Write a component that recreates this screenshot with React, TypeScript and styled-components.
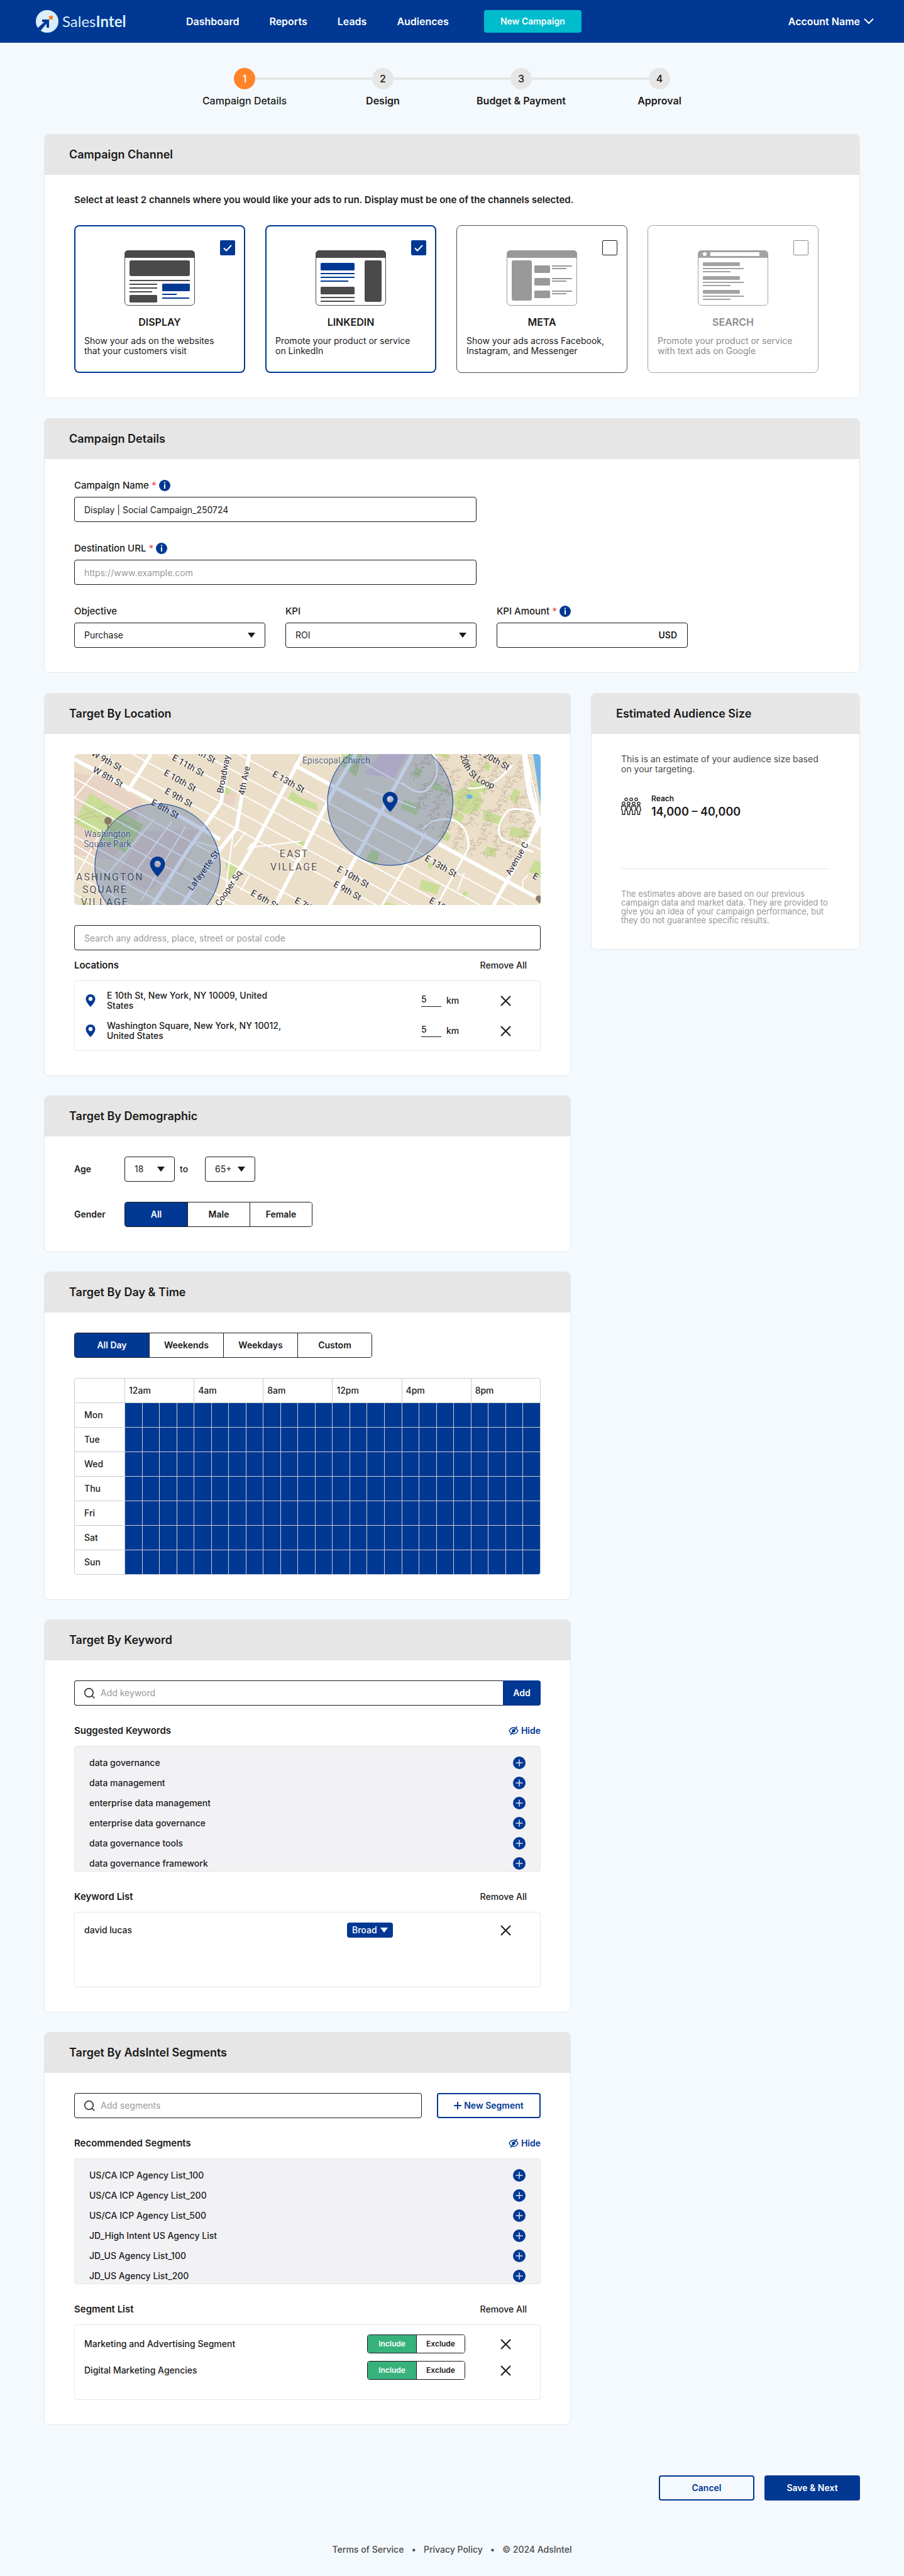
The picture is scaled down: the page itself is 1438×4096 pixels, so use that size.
import React, { useState } from "react";
import styled, { createGlobalStyle, css } from "styled-components";

const c = {
  blue: "#003893",
  teal: "#00bccc",
  orange: "#ff8329",
  ink: "#1a1a1a",
  text: "#4a4a4a",
  mute: "#999999",
  line: "#e6e6e6",
  grid: "#cccccc",
  panel: "#f2f2f5",
  page: "#f4f9fd",
  green: "#38b27d",
  red: "#ef5350",
};

const GlobalStyle = createGlobalStyle`
  *, *::before, *::after { box-sizing: border-box; }
  body {
    margin: 0;
    background: ${c.page};
    color: ${c.ink};
    font-family: Inter, "Noto Sans", sans-serif;
    font-size: 14px;
    line-height: 16px;
  }
  button, input, select { font: inherit; color: inherit; margin: 0; }
  button { cursor: pointer; }
  a { color: inherit; text-decoration: none; }
  h2, h3, p, ul, ol { margin: 0; padding: 0; font-weight: inherit; font-size: inherit; }
  ul, ol { list-style: none; }
`;

/* ---------- header ---------- */

const Header = styled.header`
  display: flex;
  align-items: center;
  height: 68px;
  padding: 0 48px 0 57px;
  background: ${c.blue};
  color: #fff;
`;
const Brand = styled.a`
  display: flex;
  align-items: center;
  gap: 6px;
  width: 239px;
  font-family: Lato, sans-serif;
  font-size: 24px;
  line-height: 32px;
  color: #d9eefa;
  b { font-weight: 700; }
`;
const Nav = styled.nav`
  display: flex;
  align-items: center;
  gap: 48px;
  font-size: 16px;
  font-weight: 600;
`;
const NewCampaign = styled.button`
  height: 36px;
  width: 155px;
  margin-left: 56px;
  border: 0;
  border-radius: 4px;
  background: ${c.teal};
  color: #fff;
  font-weight: 600;
`;
const Account = styled.button`
  display: flex;
  align-items: center;
  gap: 6px;
  margin-left: auto;
  padding: 0;
  border: 0;
  background: none;
  font-size: 16px;
  font-weight: 600;
`;

/* ---------- stepper ---------- */

const Steps = styled.ol`
  display: flex;
  justify-content: center;
  padding: 40px 0 0;
  height: 145px;
`;
const Step = styled.li<{ $current?: boolean }>`
  display: flex;
  flex-direction: column;
  align-items: center;
  gap: 10px;
  width: 220px;
  font-size: 16px;
  line-height: 16px;
  font-weight: ${(p) => (p.$current ? 500 : 600)};
`;
const StepTrack = styled.div<{ $first?: boolean; $last?: boolean }>`
  display: grid;
  grid-template-columns: 1fr 34px 1fr;
  align-items: center;
  width: 100%;
  &::before, &::after { content: ""; height: 4px; background: ${c.line}; }
  &::before { visibility: ${(p) => (p.$first ? "hidden" : "visible")}; }
  &::after { visibility: ${(p) => (p.$last ? "hidden" : "visible")}; }
`;
const StepDot = styled.span<{ $current?: boolean }>`
  display: grid;
  place-items: center;
  height: 34px;
  border-radius: 50%;
  background: ${(p) => (p.$current ? c.orange : c.line)};
  color: ${(p) => (p.$current ? "#fff" : c.ink)};
  font-weight: 500;
`;

/* ---------- page frame ---------- */

const Page = styled.main`
  display: flex;
  flex-direction: column;
  gap: 32px;
  padding: 0 70px;
`;
const Columns = styled.div`
  display: grid;
  grid-template-columns: minmax(0, 1fr) 428px;
  gap: 32px;
  align-items: start;
`;
const Stack = styled.div`
  display: flex;
  flex-direction: column;
  gap: 31px;
`;
const Card = styled.section`
  border: 1px solid ${c.line};
  border-radius: 8px;
  background: #fff;
  overflow: hidden;
`;
const CardTitle = styled.h2`
  padding: 21px 39px;
  background: ${c.line};
  font-size: 18px;
  line-height: 22px;
  font-weight: 600;
`;
const CardBody = styled.div`
  padding: 32px 47px 39px;
`;

/* ---------- shared controls ---------- */

const control = css`
  width: 100%;
  height: 40px;
  padding: 0 15px;
  border: 1px solid ${c.ink};
  border-radius: 4px;
  background: #fff;
  outline: none;
  &::placeholder { color: ${c.mute}; opacity: 1; }
`;
const Input = styled.input`${control}`;
const SelectBox = styled.span<{ $width?: number }>`
  display: grid;
  align-items: center;
  width: ${(p) => (p.$width ? `${p.$width}px` : "100%")};
  > * { grid-area: 1 / 1; }
  > svg { justify-self: end; margin-right: 16px; pointer-events: none; }
`;
const Select = styled.select`
  ${control}
  appearance: none;
`;
const BlueButton = styled.button<{ $width: number; $outline?: boolean }>`
  display: flex;
  align-items: center;
  justify-content: center;
  gap: 4px;
  flex: none;
  width: ${(p) => p.$width}px;
  height: 40px;
  padding: 0;
  border: 2px solid ${c.blue};
  border-radius: 4px;
  background: ${(p) => (p.$outline ? "transparent" : c.blue)};
  color: ${(p) => (p.$outline ? c.blue : "#fff")};
  font-weight: 600;
`;
const Segmented = styled.div<{ $cell: number; $small?: boolean }>`
  display: inline-flex;
  height: ${(p) => (p.$small ? 30 : 40)}px;
  border: 1px solid ${c.ink};
  border-radius: 4px;
  overflow: hidden;
  font-size: ${(p) => (p.$small ? 12 : 14)}px;
  font-weight: 600;
  button { width: ${(p) => p.$cell}px; }
`;
const Segment = styled.button<{ $on: boolean; $tone?: string }>`
  padding: 0;
  border: 0;
  background: ${(p) => (p.$on ? p.$tone || c.blue : "#fff")};
  color: ${(p) => (p.$on ? "#fff" : c.ink)};
  & + & { border-left: 1px solid ${c.ink}; }
`;
const IconButton = styled.button`
  display: grid;
  place-items: center;
  padding: 0;
  border: 0;
  background: none;
`;
const RowHead = styled.div<{ $inset?: boolean }>`
  display: flex;
  justify-content: space-between;
  align-items: center;
  height: 16px;
  margin: ${(p) => (p.$inset ? "0 22px 0 0" : "0")};
  h3 { font-size: 15px; font-weight: 600; }
`;
const PlainButton = styled.button`
  padding: 0;
  border: 0;
  background: none;
  font-weight: 500;
`;
const HideButton = styled(PlainButton)`
  display: flex;
  align-items: center;
  gap: 4px;
  color: ${c.blue};
  font-weight: 600;
`;

/* ---------- channels ---------- */

const Lead = styled.p`
  margin-bottom: 32px;
  font-size: 15px;
  font-weight: 600;
`;
const Channels = styled.div`
  display: grid;
  grid-template-columns: repeat(4, 272px);
  gap: 32px;
`;
const Channel = styled.label<{ $on?: boolean; $off?: boolean }>`
  display: grid;
  grid-template-columns: 1fr 112px 1fr;
  grid-template-rows: auto auto 1fr;
  height: 235px;
  padding: ${(p) => (p.$on ? "22px 14px" : "23px 15px")};
  border: ${(p) => (p.$on ? `2px solid ${c.blue}` : `1px solid ${p.$off ? "#a3a3a3" : c.text}`)};
  border-radius: 8px;
  color: ${(p) => (p.$off ? "#8c8c8c" : c.ink)};
  > svg { grid-column: 2; margin-top: 16px; }
`;
const ChannelName = styled.span`
  grid-column: 1 / -1;
  margin: 18px 0 14px;
  text-align: center;
  font-size: 16px;
  font-weight: 600;
`;
const ChannelText = styled.span`
  grid-column: 1 / -1;
  white-space: pre-line;
`;
const Tick = styled.span`
  display: grid;
  place-items: center;
  grid-column: 3;
  justify-self: end;
  align-self: start;
  grid-row: 1;
  > * { grid-area: 1 / 1; }
  svg { pointer-events: none; }
`;
const TickInput = styled.input`
  appearance: none;
  width: 24px;
  height: 24px;
  border: 1px solid currentColor;
  border-radius: 2px;
  &:checked { background: ${c.blue}; border-color: ${c.blue}; }
`;

/* ---------- details ---------- */

const Fields = styled.div`
  display: grid;
  grid-template-columns: repeat(3, 304px);
  gap: 32px;
`;
const Field = styled.div<{ $wide?: boolean }>`
  grid-column: ${(p) => (p.$wide ? "1 / -1" : "auto")};
  width: ${(p) => (p.$wide ? "640px" : "100%")};
`;
const LabelRow = styled.div`
  display: flex;
  align-items: center;
  gap: 4px;
  height: 20px;
  margin-bottom: 8px;
  font-size: 15px;
  line-height: 20px;
  font-weight: 500;
  em { color: ${c.red}; font-style: normal; }
`;
const Suffixed = styled.div`
  ${control}
  display: flex;
  align-items: center;
  padding: 0 16px 0 0;
  input { flex: 1; min-width: 0; height: 100%; border: 0; padding: 0 15px; background: none; outline: none; }
  b { font-weight: 600; }
`;

/* ---------- location ---------- */

const MapFrame = styled.div`
  height: 240px;
  border-radius: 6px;
  overflow: hidden;
  svg { display: block; width: 100%; height: 100%; }
`;
const Gap = styled.div<{ $h: number }>`
  height: ${(p) => p.$h}px;
`;
const ListBox = styled.ul<{ $height: number; $top: number }>`
  min-height: ${(p) => p.$height}px;
  padding: ${(p) => p.$top}px 15px 0;
  border: 1px solid ${c.line};
  border-radius: 4px;
`;
const PlaceRow = styled.li`
  display: grid;
  grid-template-columns: 20px 280px 1fr 78px 80px;
  column-gap: 16px;
  align-items: center;
  height: 48px;
  font-weight: 500;
  > svg { justify-self: center; }
`;
const Radius = styled.label`
  display: flex;
  align-items: center;
  gap: 8px;
  grid-column: 4;
  input { width: 32px; height: 20px; padding: 0 0 4px; border: 0; border-bottom: 1px solid ${c.ink}; background: none; outline: none; }
`;

/* ---------- audience ---------- */

const AudienceBody = styled(CardBody)`
  color: ${c.text};
`;
const Reach = styled.div`
  display: flex;
  align-items: center;
  gap: 16px;
  margin: 30px 0 78px;
  color: ${c.ink};
  dl { margin: 0; }
  dt { font-size: 12px; font-weight: 600; line-height: 18px; }
  dd { margin: 0; font-size: 18px; font-weight: 600; line-height: 24px; }
`;
const Note = styled.p`
  padding-top: 32px;
  border-top: 1px solid ${c.line};
  color: ${c.mute};
  font-size: 13px;
  line-height: 14px;
  white-space: pre-line;
`;

/* ---------- demographic ---------- */

const DemoRow = styled.div`
  display: flex;
  align-items: center;
  height: 40px;
  & + & { margin-top: 32px; }
`;
const DemoLabel = styled.span`
  width: 80px;
  font-weight: 600;
`;
const To = styled.span`
  width: 48px;
  padding-left: 8px;
  font-weight: 500;
`;

/* ---------- schedule ---------- */

const ScheduleFrame = styled.div`
  border: 1px solid ${c.grid};
  border-radius: 4px;
  overflow: hidden;
`;
const Schedule = styled.table`
  width: 100%;
  table-layout: fixed;
  border-collapse: separate;
  border-spacing: 0;
  font-weight: 500;
  td, th { height: 39px; padding: 0; text-align: left; font-weight: 500; }
  thead th, thead td { height: 38px; padding-left: 6px; }
  thead th { border-left: 1px solid ${c.grid}; }
  tbody th { padding-left: 15px; border-top: 1px solid ${c.grid}; }
  tbody td { border-top: 1px solid ${c.grid}; border-left: 1px solid ${c.grid}; background: ${c.blue}; }
`;

/* ---------- keyword / segment ---------- */

const SearchRow = styled.div<{ $joined?: boolean }>`
  display: flex;
  gap: ${(p) => (p.$joined ? 0 : 24)}px;
  ${(p) => p.$joined && css`
    > label { border-radius: 4px 0 0 4px; border-right: 0; }
    > button { border-radius: 0 4px 4px 0; }
  `}
`;
const SearchField = styled.label`
  ${control}
  display: flex;
  align-items: center;
  gap: 9px;
  flex: 1;
  input { flex: 1; min-width: 0; border: 0; padding: 0; background: none; outline: none; }
  input::placeholder { color: ${c.mute}; opacity: 1; }
`;
const Suggestions = styled.ul`
  height: 200px;
  padding: 10px 23px 0;
  border: 1px solid ${c.line};
  border-radius: 4px;
  background: ${c.panel};
  overflow: hidden;
  font-weight: 500;
  li { display: flex; justify-content: space-between; align-items: center; height: 32px; }
`;
const ListRow = styled.li<{ $gap: number }>`
  display: grid;
  grid-template-columns: minmax(0, 1fr) auto 80px;
  column-gap: ${(p) => p.$gap}px;
  align-items: center;
  height: 42px;
  font-weight: 500;
`;
const CloseCell = styled.span`
  display: flex;
  justify-content: center;
`;
const Match = styled(SelectBox)`
  > svg { margin-right: 8px; }
`;
const MatchSelect = styled.select`
  appearance: none;
  width: 73px;
  height: 24px;
  padding: 0 8px;
  border: 0;
  border-radius: 4px;
  background: ${c.blue};
  color: #fff;
  font-weight: 500;
`;

/* ---------- foot ---------- */

const Actions = styled.div`
  display: flex;
  justify-content: flex-end;
  gap: 16px;
  padding-top: 48px;
`;
const Footer = styled.footer`
  display: flex;
  justify-content: center;
  align-items: center;
  gap: 12px;
  height: 120px;
  padding-top: 36px;
  color: ${c.text};
  font-weight: 500;
`;

/* ---------- icons ---------- */

const LogoMark = () => (
  <svg width="36" height="36" viewBox="0 0 36 36" aria-hidden="true">
    <circle cx="18" cy="18" r="18" fill="#d9eefa" />
    <path d="M10 15h11v13h-4v-6.500L7.500 33 3 28.500 13.500 19H10z" fill={c.blue} />
    <rect x="21" y="9" width="6" height="6" fill={c.orange} />
  </svg>
);
const Chevron = () => (
  <svg width="16" height="10" viewBox="0 0 16 10" fill="none" stroke="#fff" strokeWidth="2" aria-hidden="true">
    <path d="M1 1l7 7 7-7" />
  </svg>
);
const Caret = ({ color = c.ink }: { color?: string }) => (
  <svg width="12" height="8" viewBox="0 0 12 8" aria-hidden="true">
    <path d="M0 0h12L6 8z" fill={color} />
  </svg>
);
const Check = () => (
  <svg width="14" height="11" viewBox="0 0 14 11" fill="none" stroke="#fff" strokeWidth="2" aria-hidden="true">
    <path d="M1 5.500l4 4 8-8.500" />
  </svg>
);
const Info = () => (
  <svg width="18" height="18" viewBox="0 0 18 18" aria-hidden="true">
    <circle cx="9" cy="9" r="9" fill={c.blue} />
    <rect x="8" y="7" width="2" height="7" fill="#fff" />
    <rect x="8" y="3.500" width="2" height="2" fill="#fff" />
  </svg>
);
const PinShape = () => (
  <path
    fill={c.blue}
    fillRule="evenodd"
    d="M12 0C5.400 0 0 5.200 0 11.800 0 20 12 32 12 32s12-12 12-20.200C24 5.200 18.600 0 12 0zm0 6.500a5.200 5.200 0 1 1 0 10.400 5.200 5.200 0 0 1 0-10.400z"
  />
);
const Pin = () => (
  <svg width="16" height="20" viewBox="0 0 24 32" aria-hidden="true">
    <PinShape />
  </svg>
);
const Close = () => (
  <svg width="17" height="17" viewBox="0 0 17 17" fill="none" stroke={c.ink} strokeWidth="2" aria-hidden="true">
    <path d="M1 1l15 15M16 1L1 16" />
  </svg>
);
const Search = () => (
  <svg width="17" height="17" viewBox="0 0 17 17" fill="none" stroke={c.ink} strokeWidth="1.500" aria-hidden="true">
    <circle cx="7.500" cy="7.500" r="6.700" />
    <path d="M12.300 12.300l4 4" />
  </svg>
);
const EyeOff = () => (
  <svg width="16" height="14" viewBox="0 0 16 14" fill="none" stroke={c.blue} strokeWidth="1.500" aria-hidden="true">
    <path d="M1 7c2-3.500 4.300-5 7-5s5 1.500 7 5c-2 3.500-4.300 5-7 5S3 10.500 1 7z" />
    <circle cx="8" cy="7" r="2.700" fill={c.blue} stroke="none" />
    <path d="M13.500 0L3 14" />
  </svg>
);
const PlusDot = () => (
  <svg width="20" height="20" viewBox="0 0 20 20" aria-hidden="true">
    <circle cx="10" cy="10" r="10" fill={c.blue} />
    <path d="M10 4.500v11M4.500 10h11" stroke="#d9e2f2" strokeWidth="1.500" />
  </svg>
);
const Plus = () => (
  <svg width="12" height="12" viewBox="0 0 12 12" aria-hidden="true">
    <path d="M6 0v12M0 6h12" stroke={c.blue} strokeWidth="2" />
  </svg>
);
const People = () => (
  <svg width="32" height="28" viewBox="0 0 32 28" fill="none" stroke={c.ink} strokeWidth="1.300" aria-hidden="true">
    {[8, 16, 24].map((x) => <circle key={x} cx={x} cy="3" r="2.200" />)}
    {[4, 12, 20, 28].map((x) => <circle key={x} cx={x} cy="9.500" r="2.200" />)}
    {[4, 20].map((x) => (
      <path key={x} d={`M${x - 3.3} 13.500h6.600v6l-1.300 1v6.500h-4v-6.500l-1.300-1z`} />
    ))}
    {[12, 28].map((x) => (
      <path key={x} d={`M${x - 1.8} 13.500h3.600l1.700 7-1.900 1.500v5h-3.200v-5l-1.900-1.500z`} />
    ))}
  </svg>
);

type Bar = [number, number, number, number, string?];
const Browser = ({ tone, bars, search }: { tone: string; bars: Bar[]; search?: boolean }) => (
  <svg width="112" height="88" viewBox="0 0 112 88" aria-hidden="true">
    <rect x="0.500" y="0.500" width="111" height="87" rx="5.500" fill="#fff" stroke={tone} />
    <path d="M0 12V6a6 6 0 0 1 6-6h100a6 6 0 0 1 6 6v6z" fill={tone} />
    {search && <circle cx="11" cy="6" r="3" fill="#fff" />}
    {search && <rect x="20" y="3" width="78" height="6" fill="#fff" />}
    {bars.map(([x, y, w, h, fill], i) => (
      <rect key={i} x={x} y={y} width={w} height={h} rx={h > 20 ? 3 : h > 2 ? 1.5 : 0} fill={fill || tone} />
    ))}
  </svg>
);

const displayBars: Bar[] = [
  [8, 16, 96, 25], [8, 47, 96, 2], [8, 53, 44, 2], [8, 59, 44, 2], [8, 65, 36, 2], [8, 71, 44, 12],
  [60, 53, 44, 12, c.blue], [60, 69, 23, 2, c.blue], [60, 75, 43, 2, c.blue],
];
const linkedinBars: Bar[] = [
  [8, 20, 54, 12, c.blue], [8, 36, 54, 2, c.blue], [8, 42, 54, 2, c.blue], [8, 48, 44, 2, c.blue],
  [8, 58, 54, 12], [8, 74, 54, 2], [8, 80, 54, 2], [78, 16, 27, 66],
];
const metaBars: Bar[] = [
  [8, 16, 32, 64],
  ...[24, 44, 64].flatMap((y): Bar[] => [[44, y, 25, 12], [72, y, 32, 2], [72, y + 4, 23, 2]]),
];
const searchBars: Bar[] = [19, 41, 63].flatMap((y): Bar[] => [[8, y, 59, 6], [8, y + 9, 65, 2], [8, y + 14, 44, 2]]);

/* ---------- map ---------- */

const crossStreets = [-158, -82, -7, 67, 138, 285, 360, 435, 510, 585, 660, 735];
const courtyards = Array.from({ length: 96 }, (_, i) => {
  const x = 1090 + ((i * 67) % 350);
  const y = 262 + ((i * 113) % 400);
  return { x, y, turn: (i * 47) % 180 };
}).filter((p) => p.y < 0.73 * p.x - 260);

const Roads = styled.g`
  fill: none;
  stroke: #fff;
  stroke-linejoin: round;
  path { vector-effect: non-scaling-stroke; }
`;
const MapText = styled.g`
  font-family: Roboto, sans-serif;
  font-size: 14px;
  fill: #1f2126;
  stroke: #fff;
  stroke-opacity: 0.6;
  stroke-width: 2px;
  paint-order: stroke;
  text-anchor: middle;
`;
const Place = styled.text`
  fill: #5f6472;
`;
const District = styled.text`
  font-size: 16px;
  letter-spacing: 2px;
  fill: #5f5346;
`;

const streetNames: [string, number, number, number][] = [
  ["W 9th St", 52, 10, 29], ["W 8th St", 54, 36, 29], ["E 11th St", 182, 18, 29], ["E 12th St", 200, -3, 29],
  ["E 10th St", 169, 42, 29], ["E 9th St", 167, 69, 29], ["E 8th St", 145, 87, 29], ["E 13th St", 342, 44, 29],
  ["Broadway", 238, 32, -79], ["4th Ave", 271, 42, -79], ["Lafayette St", 206, 185, -54], ["Cooper Sq", 246, 213, -56],
  ["Avenue C", 706, 166, -60], ["E 13th St", 585, 178, 29], ["E 10th St", 445, 195, 29], ["E 9th St", 436, 217, 29],
  ["E 6th St", 304, 231, 29], ["E 7th St", 374, 243, 29], ["E 12th St", 592, 245, 29], ["E 20th St", 669, 8, 29],
  ["E 12th St", 757, 206, 29],
];

const CityMap = () => (
  <svg viewBox="0 0 744 240" preserveAspectRatio="none" role="img" aria-label="Map of the East Village with two target areas">
    <rect width="744" height="240" fill="#ebdfca" />
    <g transform="scale(.5487 .4082) translate(-106 -268)">
      <g fill="#e9d3c4">
        <path d="M106 340l90 20 110 90-30 120-60 110-110-20z" />
        <path d="M310 570l170-10-60 160-100 80-90-60z" />
        <path d="M540 400l40 10-10 60-50-10z" />
      </g>
      <path fill="#e6cdd6" d="M995 268h80l-40 95-85-18z" />
      <g fill="#c8dd95">
        <path d="M152 420l155 125-50 110-151-120z" />
        <path d="M545 690l45 20-35 50zM740 410l20 25 50 25 5 30-60-30-28-20zM745 610l35-2-10 30zM545 395l18 5-5 25-15-5z" />
        <path d="M885 268h60l-20 90-45-50zM1145 365l60 60-60-20zM1065 445l45 25-10 35-45-25zM1100 320l20 15-15 30-15-15z" />
        <ellipse cx="1250" cy="450" rx="42" ry="50" />
        <path d="M1260 370l50 15-10 35-50-20zM1295 485l60 30-5 30-55-20zM1385 400l18 15-10 45-22-15zM1215 490l25 20-10 30-25-20zM1375 550l50 15 5 30-60-5zM1305 625l30 15-8 32-28-15zM1300 300l18 12-8 22-20-12zM1180 570l22 15-10 25-20-15zM970 640l25 15-15 50-25-30zM1115 755l55 25-10 35-50-20zM1130 690l20 5-10 25zM1160 740l-15 25zM1240 800l12 8-10 22-10-8zM1445 680l17 10v60l-35-25zM1015 845l30 12h-40zM130 815l20 42h-25zM1150 268h45v20z" />
      </g>
      <ellipse cx="1255" cy="434" rx="9" ry="9" fill="#6db3e8" />
      <path d="M1440 268h22v200z" fill="#6db3e8" />
      <Roads style={{ stroke: "#c6b39a" }} strokeWidth="1">
        {courtyards.map((p, i) => (
          <path key={i} transform={`translate(${p.x} ${p.y}) rotate(${p.turn})`} d="M-18 0q9-12 18 0t18 0M-8-14v14l8 12M8-6l12-8M4 2v14" />
        ))}
        <path d="M106 520l100-50M130 470l120 130M110 540q60-70 190 20M930 300v30q-12 20-12-6z" />
      </Roads>
      <Roads strokeWidth="2">
        {crossStreets.map((k) => (
          <path key={k} d={`M106 ${77 + k}L1500 ${1095 + k}`} />
        ))}
        <path d="M930 290l150 110M950 400l150 78M106 440l60-100 45-72M106 620l60 50M200 740l140-220M250 790l140-260M300 840l130-290M106 760l70-170" />
        <path d="M570 560L540 857M590 800l25-60M605 570l-35 60M630 630l135-22M1420 268l30 180 12 100M460 610l70 25M1462 640l-60-40M1220 800l20-70M1410 800v-40l15-20" />
      </Roads>
      <Roads strokeWidth="3">
        <path d="M1120 560q30-50 90-35 45 30 42 110l-12 30M1455 500q-60-30-90-10-40 70-15 110l90 50M1060 380q40 50 70 30 50-60 20-142M1250 400q60 10 110-60l20-30" />
        <path d="M1240 665l-80 192M1128 575L1000 857M610 640l15-25" />
      </Roads>
      <Roads strokeWidth="6">
        <path d="M106 288L340 455 530 600M330 268L262 412M555 268l-22 190-100 190-100 210M615 268l-25 190-12 100-48 80-110 219" />
        <path d="M770 268L630 620 585 720 520 857M925 268l-60 130-95 250-80 209M1090 268l-90 222L848 857M745 310L1462 835M1450 555L1325 857" />
      </Roads>
      <Roads strokeWidth="9">
        <path d="M1415 268l15 150 27 115-15 40" />
      </Roads>
    </g>
    <MapText>
      <Place x="418" y="15">Episcopal Church</Place>
      <Place x="53" y="132">Washington</Place>
      <Place x="53" y="148">Square Park</Place>
      <District x="57" y="201">ASHINGTON</District>
      <District x="49" y="221">SQUARE</District>
      <District x="49" y="241">VILLAGE</District>
      <District x="351" y="164">EAST</District>
      <District x="351" y="185">VILLAGE</District>
      {streetNames.map(([name, x, y, a], i) => (
        <text key={i} transform={`translate(${x} ${y}) rotate(${a})`} dy="5">{name}</text>
      ))}
      <path id="loop" d="M616 2Q624 44 672 56" fill="none" stroke="none" />
      <text style={{ textAnchor: "start" }}><textPath href="#loop">20th St Loop</textPath></text>
    </MapText>
    <g fill="#8a7866">
      <circle cx="54" cy="106" r="6" /><rect x="53" y="108" width="2" height="10" />
      <path d="M736 231a5 5 0 0 1 8-5v14z" />
    </g>
    <g fill={c.blue} fillOpacity="0.250" stroke={c.blue}>
      <circle cx="133" cy="179" r="100" />
      <circle cx="504" cy="77" r="100" />
    </g>
    <g transform="translate(121 163)"><PinShape /></g>
    <g transform="translate(492 60)"><PinShape /></g>
  </svg>
);

/* ---------- parts ---------- */

const Toggle = ({ label, options, cell, small, tone }: {
  label: string; options: string[]; cell: number; small?: boolean; tone?: string;
}) => {
  const [on, setOn] = useState(0);
  return (
    <Segmented role="group" aria-label={label} $cell={cell} $small={small}>
      {options.map((o, i) => (
        <Segment key={o} type="button" $on={i === on} $tone={tone} aria-pressed={i === on} onClick={() => setOn(i)}>{o}</Segment>
      ))}
    </Segmented>
  );
};

const ChannelCard = ({ name, text, art, checked, disabled }: {
  name: string; text: string; art: React.ReactNode; checked?: boolean; disabled?: boolean;
}) => (
  <Channel $on={checked} $off={disabled}>
    {art}
    <Tick>
      <TickInput type="checkbox" defaultChecked={checked} disabled={disabled} />
      {checked && <Check />}
    </Tick>
    <ChannelName>{name}</ChannelName>
    <ChannelText>{text}</ChannelText>
  </Channel>
);

const FieldLabel = ({ id, text, required }: { id: string; text: string; required?: boolean }) => (
  <LabelRow>
    <label htmlFor={id}>{text}</label>
    {required && <em>*</em>}
    {required && <Info />}
  </LabelRow>
);

const SuggestionList = ({ items }: { items: string[] }) => (
  <Suggestions>
    {items.map((item) => (
      <li key={item}>
        {item}
        <IconButton type="button" aria-label={`Add ${item}`}><PlusDot /></IconButton>
      </li>
    ))}
  </Suggestions>
);

const Remove = ({ what }: { what: string }) => (
  <CloseCell>
    <IconButton type="button" aria-label={`Remove ${what}`}><Close /></IconButton>
  </CloseCell>
);

const places = ["E 10th St, New York, NY 10009, United States", "Washington Square, New York, NY 10012, United States"];
const keywords = ["data governance", "data management", "enterprise data management", "enterprise data governance", "data governance tools", "data governance framework"];
const segments = ["US/CA ICP Agency List_100", "US/CA ICP Agency List_200", "US/CA ICP Agency List_500", "JD_High Intent US Agency List", "JD_US Agency List_100", "JD_US Agency List_200"];
const chosen = ["Marketing and Advertising Segment", "Digital Marketing Agencies"];
const hours = ["12am", "4am", "8am", "12pm", "4pm", "8pm"];
const days = ["Mon", "Tue", "Wed", "Thu", "Fri", "Sat", "Sun"];
const steps = ["Campaign Details", "Design", "Budget & Payment", "Approval"];
const note = `The estimates above are based on our previous
campaign data and market data. They are provided to
give you an idea of your campaign performance, but
they do not guarantee specific results.`;

export default function App() {
  return (
    <>
      <GlobalStyle />
      <Header>
        <Brand href="#"><LogoMark /><span>Sales<b>Intel</b></span></Brand>
        <Nav>
          <a href="#">Dashboard</a>
          <a href="#">Reports</a>
          <a href="#">Leads</a>
          <a href="#">Audiences</a>
        </Nav>
        <NewCampaign type="button">New Campaign</NewCampaign>
        <Account type="button">Account Name<Chevron /></Account>
      </Header>

      <Steps>
        {steps.map((s, i) => (
          <Step key={s} $current={i === 0}>
            <StepTrack $first={i === 0} $last={i === steps.length - 1}>
              <StepDot $current={i === 0}>{i + 1}</StepDot>
            </StepTrack>
            {s}
          </Step>
        ))}
      </Steps>

      <Page>
        <Card>
          <CardTitle>Campaign Channel</CardTitle>
          <CardBody>
            <Lead>Select at least 2 channels where you would like your ads to run. Display must be one of the channels selected.</Lead>
            <Channels>
              <ChannelCard checked name="DISPLAY" text={"Show your ads on the websites\nthat your customers visit"} art={<Browser tone={c.text} bars={displayBars} />} />
              <ChannelCard checked name="LINKEDIN" text={"Promote your product or service\non LinkedIn"} art={<Browser tone={c.text} bars={linkedinBars} />} />
              <ChannelCard name="META" text={"Show your ads across Facebook,\nInstagram, and Messenger"} art={<Browser tone="#999" bars={metaBars} />} />
              <ChannelCard disabled name="SEARCH" text={"Promote your product or service\nwith text ads on Google"} art={<Browser tone="#a3a3a3" bars={searchBars} search />} />
            </Channels>
          </CardBody>
        </Card>

        <Card>
          <CardTitle>Campaign Details</CardTitle>
          <CardBody>
            <Fields>
              <Field $wide>
                <FieldLabel id="name" text="Campaign Name" required />
                <Input id="name" defaultValue="Display | Social Campaign_250724" />
              </Field>
              <Field $wide>
                <FieldLabel id="url" text="Destination URL" required />
                <Input id="url" placeholder="https://www.example.com" />
              </Field>
              <Field>
                <FieldLabel id="objective" text="Objective" />
                <SelectBox><Select id="objective"><option>Purchase</option></Select><Caret /></SelectBox>
              </Field>
              <Field>
                <FieldLabel id="kpi" text="KPI" />
                <SelectBox><Select id="kpi"><option>ROI</option></Select><Caret /></SelectBox>
              </Field>
              <Field>
                <FieldLabel id="amount" text="KPI Amount" required />
                <Suffixed><input id="amount" /><b>USD</b></Suffixed>
              </Field>
            </Fields>
          </CardBody>
        </Card>

        <Columns>
          <Stack>
            <Card>
              <CardTitle>Target By Location</CardTitle>
              <CardBody>
                <MapFrame><CityMap /></MapFrame>
                <Gap $h={32} />
                <Input aria-label="Search locations" placeholder="Search any address, place, street or postal code" />
                <Gap $h={16} />
                <RowHead $inset><h3>Locations</h3><PlainButton type="button">Remove All</PlainButton></RowHead>
                <Gap $h={16} />
                <ListBox $height={112} $top={7}>
                  {places.map((p) => (
                    <PlaceRow key={p}>
                      <Pin />
                      <span>{p}</span>
                      <Radius><input defaultValue="5" />km</Radius>
                      <Remove what={p} />
                    </PlaceRow>
                  ))}
                </ListBox>
              </CardBody>
            </Card>

            <Card>
              <CardTitle>Target By Demographic</CardTitle>
              <CardBody>
                <DemoRow>
                  <DemoLabel>Age</DemoLabel>
                  <SelectBox $width={80}><Select aria-label="Youngest age"><option>18</option></Select><Caret /></SelectBox>
                  <To>to</To>
                  <SelectBox $width={80}><Select aria-label="Oldest age"><option>65+</option></Select><Caret /></SelectBox>
                </DemoRow>
                <DemoRow>
                  <DemoLabel>Gender</DemoLabel>
                  <Toggle label="Gender" options={["All", "Male", "Female"]} cell={99} />
                </DemoRow>
              </CardBody>
            </Card>

            <Card>
              <CardTitle>Target By Day &amp; Time</CardTitle>
              <CardBody>
                <DemoRow>
                  <Toggle label="Days" options={["All Day", "Weekends", "Weekdays", "Custom"]} cell={118} />
                </DemoRow>
                <Gap $h={32} />
                <ScheduleFrame>
                  <Schedule>
                    <colgroup>
                      <col width="79" />
                      {Array.from({ length: 24 }, (_, i) => <col key={i} />)}
                    </colgroup>
                    <thead>
                      <tr>
                        <td />
                        {hours.map((h) => <th key={h} scope="col" colSpan={4}>{h}</th>)}
                      </tr>
                    </thead>
                    <tbody>
                      {days.map((d) => (
                        <tr key={d}>
                          <th scope="row">{d}</th>
                          {Array.from({ length: 24 }, (_, i) => <td key={i} />)}
                        </tr>
                      ))}
                    </tbody>
                  </Schedule>
                </ScheduleFrame>
              </CardBody>
            </Card>

            <Card>
              <CardTitle>Target By Keyword</CardTitle>
              <CardBody>
                <SearchRow $joined>
                  <SearchField><Search /><input aria-label="Keyword" placeholder="Add keyword" /></SearchField>
                  <BlueButton type="button" $width={60}>Add</BlueButton>
                </SearchRow>
                <Gap $h={32} />
                <RowHead><h3>Suggested Keywords</h3><HideButton type="button"><EyeOff />Hide</HideButton></RowHead>
                <Gap $h={16} />
                <SuggestionList items={keywords} />
                <Gap $h={32} />
                <RowHead $inset><h3>Keyword List</h3><PlainButton type="button">Remove All</PlainButton></RowHead>
                <Gap $h={16} />
                <ListBox $height={120} $top={7}>
                  <ListRow $gap={139}>
                    <span>david lucas</span>
                    <Match $width={73}><MatchSelect aria-label="Match type"><option>Broad</option></MatchSelect><Caret color="#fff" /></Match>
                    <Remove what="david lucas" />
                  </ListRow>
                </ListBox>
              </CardBody>
            </Card>

            <Card>
              <CardTitle>Target By AdsIntel Segments</CardTitle>
              <CardBody>
                <SearchRow>
                  <SearchField><Search /><input aria-label="Segments" placeholder="Add segments" /></SearchField>
                  <BlueButton type="button" $width={165} $outline><Plus />New Segment</BlueButton>
                </SearchRow>
                <Gap $h={32} />
                <RowHead><h3>Recommended Segments</h3><HideButton type="button"><EyeOff />Hide</HideButton></RowHead>
                <Gap $h={16} />
                <SuggestionList items={segments} />
                <Gap $h={32} />
                <RowHead $inset><h3>Segment List</h3><PlainButton type="button">Remove All</PlainButton></RowHead>
                <Gap $h={16} />
                <ListBox $height={120} $top={9}>
                  {chosen.map((s) => (
                    <ListRow key={s} $gap={24}>
                      <span>{s}</span>
                      <Toggle label={s} options={["Include", "Exclude"]} cell={77} small tone={c.green} />
                      <Remove what={s} />
                    </ListRow>
                  ))}
                </ListBox>
              </CardBody>
            </Card>
          </Stack>

          <Card>
            <CardTitle>Estimated Audience Size</CardTitle>
            <AudienceBody>
              <p>This is an estimate of your audience size based on your targeting.</p>
              <Reach>
                <People />
                <dl><dt>Reach</dt><dd>14,000 – 40,000</dd></dl>
              </Reach>
              <Note>{note}</Note>
            </AudienceBody>
          </Card>
        </Columns>

        <Actions>
          <BlueButton type="button" $width={152} $outline>Cancel</BlueButton>
          <BlueButton type="button" $width={152}>Save &amp; Next</BlueButton>
        </Actions>
      </Page>

      <Footer>
        <a href="#">Terms of Service</a><span>•</span><a href="#">Privacy Policy</a><span>•</span><span>© 2024 AdsIntel</span>
      </Footer>
    </>
  );
}
